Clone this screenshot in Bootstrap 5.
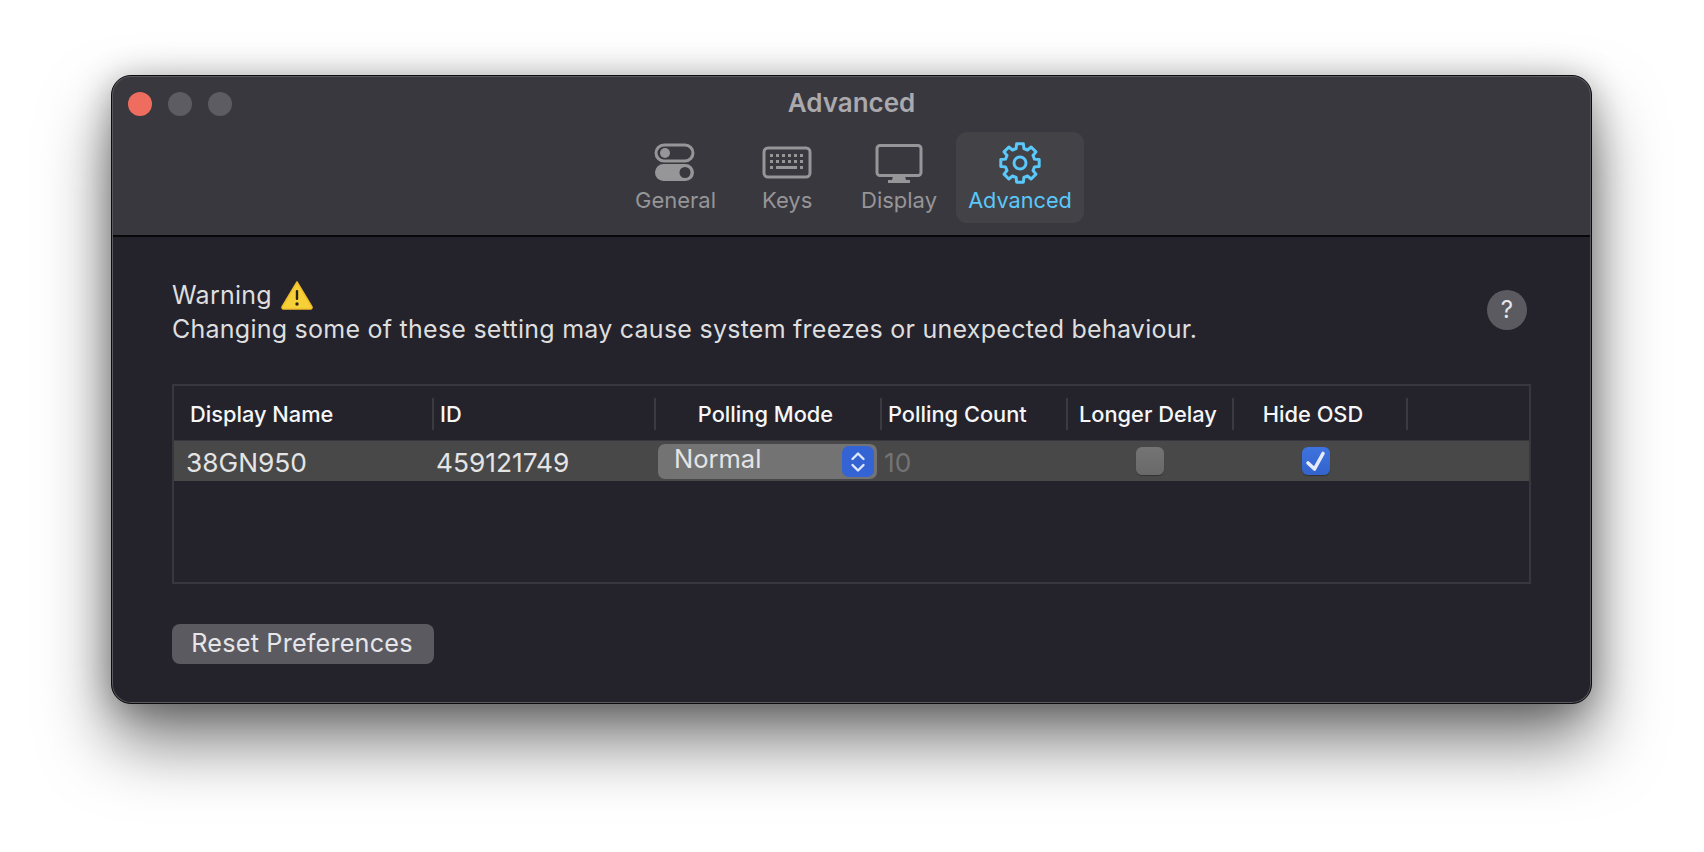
<!DOCTYPE html>
<html lang="en">
<head>
<meta charset="UTF-8" />
<title>Advanced</title>
<link href="https://cdn.jsdelivr.net/npm/bootstrap@5.3.3/dist/css/bootstrap.min.css" rel="stylesheet" />
<style>
  body { background: #fff; font-family: Inter, "Liberation Sans", sans-serif; min-height: 852px; overflow: hidden; }
  .prefs-window { width: 1481px; height: 629px; margin: 75px 0 0 111px; background: #24232c; border: 1px solid #0c0c0e; border-radius: 20px; overflow: hidden; position: relative; box-shadow: 0 38px 68px rgba(0,0,0,.52), 0 4px 34px rgba(0,0,0,.3); }
  .prefs-window::after { content: ""; position: absolute; inset: 0; border-radius: 19px; box-shadow: inset 0 0 0 1px #5a5a5e; pointer-events: none; }
  .prefs-head { height: 161px; background: #39383e; border-bottom: 2px solid #08080a; position: relative; }
  .traffic { left: 16px; top: 16px; }
  .dot { width: 24px; height: 24px; border-radius: 50%; background: #5d5c62; }
  .dot-red { background: #ee6d5e; }
  .win-title { height: 56px; padding-top: 12px; font-size: 26px; line-height: 30px; font-weight: 600; color: #aaa9ad; text-align: center; }
  .tabs { padding-left: 511px; height: 91px; }
  .tab-item { height: 91px; padding: 0 12px; color: #969598; font-size: 22px; line-height: 26px; text-align: center; border-radius: 11px; white-space: nowrap; }
  .tab-item svg { display: block; margin: 0 auto 3px; height: 52px; }
  .tab-item.on { background: #434247; color: #5ac8fa; font-size: 21.7px; margin-left: 8px; width: 128px; }
  .tab-general { width: 104px; margin-right: 23px; }
  .tab-keys { width: 74px; margin-right: 25px; }
  .tab-display { width: 99px; }
  .prefs-body { padding: 41px 60px 0; color: #dededf; }
  .warn-text { font-size: 25px; line-height: 34px; letter-spacing: .25px; }
  .help-btn { width: 40px; height: 40px; margin: 0 4px 4px 0; padding: 0; border: 0; border-radius: 50%; background: #5a5a60; color: #e6e6e8; font-size: 24px; line-height: 40px; }
  .disp-table { height: 200px; margin-top: 38px; border: 2px solid #38373d; }
  .t-grid { display: grid; grid-template-columns: 260px 222px 226px 186px 166px 174px 1fr; }
  .t-head { height: 54px; padding-top: 12px; font-size: 21.8px; line-height: 32px; font-weight: 500; color: #f6f6f7; }
  .t-head > div { height: 32px; border-right: 2px solid #3b3a40; padding-left: 6px; white-space: nowrap; }
  .t-head > div:last-child { border-right: 0; }
  .t-head .h-mode { padding-right: 11px; }
  .t-head .h-delay { padding-left: 11px; }
  .t-head .h-osd { padding-right: 20px; }
  .t-row { height: 41px; background: #484848; border-top: 1px solid #38373d; font-size: 26.3px; line-height: 44px; color: #e4e4e5; }
  .c-id { padding-left: 2px; }
  .c-count { padding-left: 2px; color: #737373; }
  .sel-box { width: 219px; height: 35px; margin: 3px 0 0 2px; padding-left: 16px; background: #737373; border-radius: 7px; font-size: 25.5px; line-height: 30px; position: relative; }
  .sel-arrows { right: 3px; top: 2px; width: 32px; height: 31px; background: #3464d4; border-radius: 7px; }
  .chk { width: 28px; height: 28px; margin-top: 6px; border-radius: 6px; background: linear-gradient(#747474, #696969); box-shadow: 0 1px 1px rgba(0,0,0,.3); }
  .chk-delay { margin-right: 2px; }
  .chk-on { background: linear-gradient(#3f73df, #3363cc); margin-right: 10px; }
  .chk-on svg { display: block; }
  .reset-btn { margin-top: 40px; width: 262px; height: 40px; padding: 0 2px 2px 0; border: 0; border-radius: 8px; background: #5b5a61; color: #e6e6e8; font-size: 25.2px; line-height: 36px; letter-spacing: .2px; }
  .reset-btn:hover { background: #5b5a61; color: #e6e6e8; }
</style>
</head>
<body>
  <div class="prefs-window">
    <div class="prefs-head">
      <div class="traffic position-absolute d-flex gap-3">
        <div class="dot dot-red"></div><div class="dot"></div><div class="dot"></div>
      </div>
      <div class="win-title">Advanced</div>
      <div class="tabs d-flex">
        <div class="tab-item tab-general">
          <svg width="42" height="52" viewBox="0 0 42 52"><rect x="2" y="13" width="37" height="16" rx="8" fill="none" stroke="#969598" stroke-width="3"/><circle cx="11" cy="21" r="5" fill="#969598"/><rect x="1" y="32" width="39" height="17" rx="8.5" fill="#969598"/><circle cx="31" cy="40.5" r="5.5" fill="#39383e"/></svg>
          General
        </div>
        <div class="tab-item tab-keys">
          <svg width="50" height="52" viewBox="0 0 50 52"><rect x="2" y="16" width="46" height="29" rx="4" fill="none" stroke="#969598" stroke-width="3"/><g fill="#969598"><rect x="8" y="22" width="3" height="3"/><rect x="14" y="22" width="3" height="3"/><rect x="20" y="22" width="3" height="3"/><rect x="26" y="22" width="3" height="3"/><rect x="32" y="22" width="3" height="3"/><rect x="38" y="22" width="3" height="3"/><rect x="8" y="28" width="3" height="3"/><rect x="14" y="28" width="3" height="3"/><rect x="20" y="28" width="3" height="3"/><rect x="26" y="28" width="3" height="3"/><rect x="32" y="28" width="3" height="3"/><rect x="38" y="28" width="3" height="3"/><rect x="8" y="34" width="3" height="3"/><rect x="14" y="34" width="21" height="3"/><rect x="38" y="34" width="3" height="3"/></g></svg>
          Keys
        </div>
        <div class="tab-item tab-display">
          <svg width="48" height="52" viewBox="0 0 48 52"><rect x="2" y="13.500" width="44" height="30" rx="3" fill="none" stroke="#969598" stroke-width="3"/><path d="M18 44h12l1 4h4v3H13v-3h4z" fill="#969598"/></svg>
          Display
        </div>
        <div class="tab-item on">
          <svg width="44" height="52" viewBox="0 0 44 52"><g transform="translate(22 31)" fill="none" stroke="#5ac8fa" stroke-width="3" stroke-linejoin="round"><path d="M-3.39-19.2 3.39-19.2 3.88-14.49 7.5-12.99 11.18-15.97 15.97-11.18 12.99-7.5 14.49-3.88 19.2-3.39 19.2 3.39 14.49 3.88 12.99 7.5 15.97 11.18 11.18 15.97 7.5 12.99 3.88 14.49 3.39 19.2-3.39 19.2-3.88 14.49-7.5 12.99-11.18 15.97-15.97 11.18-12.99 7.5-14.49 3.88-19.2 3.39-19.2-3.39-14.49-3.88-12.99-7.5-15.97-11.18-11.18-15.97-7.5-12.99-3.88-14.49z"/><circle r="6"/></g></svg>
          Advanced
        </div>
      </div>
    </div>
    <div class="prefs-body">
      <div class="d-flex justify-content-between align-items-center">
        <div class="warn-text">
          <div class="d-flex align-items-center gap-2">Warning
            <svg width="34" height="30" viewBox="0 0 34 30"><path d="M17 2 32 27a1.500 1.500 0 0 1-1.500 2h-27A1.500 1.500 0 0 1 2 27z" fill="#f7cf37" stroke="#f2bd2c" stroke-linejoin="round" stroke-width="1.500"/><rect x="15.800" y="10" width="2.400" height="10" rx="1" fill="#2a2415"/><circle cx="17" cy="24" r="1.700" fill="#2a2415"/></svg>
          </div>
          <div>Changing some of these setting may cause system freezes or unexpected behaviour.</div>
        </div>
        <button class="help-btn" type="button">?</button>
      </div>
      <div class="disp-table">
        <div class="t-grid t-head">
          <div class="ps-3">Display Name</div>
          <div>ID</div>
          <div class="text-center h-mode">Polling Mode</div>
          <div>Polling Count</div>
          <div class="h-delay">Longer Delay</div>
          <div class="text-center h-osd">Hide OSD</div>
          <div></div>
        </div>
        <div class="t-grid t-row">
          <div class="ps-2 ms-1">38GN950</div>
          <div class="c-id">459121749</div>
          <div><div class="sel-box">Normal
            <div class="sel-arrows position-absolute d-flex align-items-center justify-content-center">
              <svg width="16" height="24" viewBox="0 0 16 24"><path d="M2.500 9 8 3.500 13.500 9M2.500 15 8 20.500 13.500 15" fill="none" stroke="#dfe7fb" stroke-width="2.400" stroke-linecap="round" stroke-linejoin="round"/></svg>
            </div></div></div>
          <div class="c-count">10</div>
          <div class="d-flex justify-content-center"><div class="chk chk-delay"></div></div>
          <div class="d-flex justify-content-center"><div class="chk chk-on">
            <svg width="28" height="28" viewBox="0 0 28 28"><path d="M6 16 12.500 22 21 6.500" fill="none" stroke="#e6ecfb" stroke-width="3.600" stroke-linecap="round" stroke-linejoin="round"/></svg>
          </div></div>
          <div></div>
        </div>
      </div>
      <button class="btn reset-btn" type="button">Reset Preferences</button>
    </div>
  </div>
<script src="https://cdn.jsdelivr.net/npm/bootstrap@5.3.3/dist/js/bootstrap.bundle.min.js"></script>
</body>
</html>
